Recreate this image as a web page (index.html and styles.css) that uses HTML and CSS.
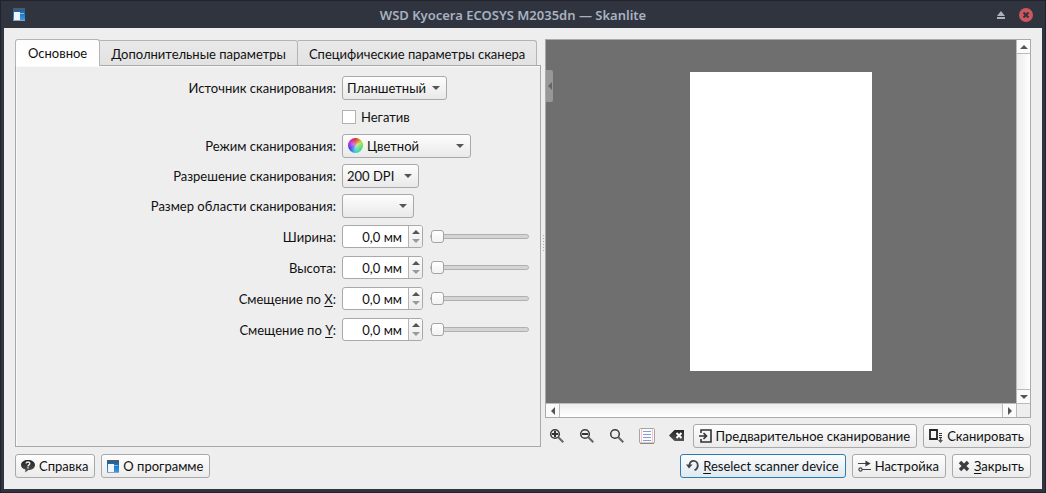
FILE: index.html
```html
<!DOCTYPE html>
<html lang="ru">
<head>
<meta charset="utf-8">
<title>WSD Kyocera ECOSYS M2035dn — Skanlite</title>
<link rel="stylesheet" href="styles.css">
</head>
<body>
<svg class="defs" aria-hidden="true">
  <defs>
    <linearGradient id="blue" x1="0" y1="0" x2="0" y2="1"><stop offset="0" stop-color="#1b5f9f"/><stop offset="1" stop-color="#2f9af0"/></linearGradient>
    <linearGradient id="dark" x1="0" y1="0" x2="0" y2="1"><stop offset="0" stop-color="#222"/><stop offset="1" stop-color="#555"/></linearGradient>
    <symbol id="app" viewBox="0 0 12 13">
      <rect width="12" height="13" fill="#8fb4d6"/><rect width="12" height="2" fill="#4c5a68"/>
      <rect y="2" width="12" height="10" fill="url(#blue)"/><rect x="7" y="5" width="4" height="1" fill="#6fbcff"/>
      <rect x="1" y="4" width="6" height="8" fill="#f2f5f8"/><rect y="12" width="12" height="1" fill="#90a4b5"/>
    </symbol>
    <symbol id="up" viewBox="0 0 8 4"><path d="M0 4 4 0l4 4z"/></symbol>
    <symbol id="down" viewBox="0 0 8 4"><path d="M0 0h8L4 4z"/></symbol>
    <symbol id="left" viewBox="0 0 4 8"><path d="M4 0v8L0 4z"/></symbol>
    <symbol id="right" viewBox="0 0 4 8"><path d="M0 0v8l4-4z"/></symbol>
    <symbol id="lens" viewBox="0 0 16 16"><circle cx="6" cy="6" r="4.3" fill="none" stroke="#3a3a3a" stroke-width="1.5"/><path d="m9.3 9.3 5 5" stroke="#666" stroke-width="2"/></symbol>
  </defs>
</svg>
<div class="window">
  <header class="titlebar">
    <svg class="title-icon"><use href="#app"/></svg>
    <h1>WSD Kyocera ECOSYS M2035dn — Skanlite</h1>
    <div class="window-buttons">
      <button class="win-btn" aria-label="Свернуть"><svg width="8" height="8" viewBox="0 0 8 8" fill="#abb2c0"><path d="M0 5 4 0l4 5zM0 6h8v2H0z"/></svg></button>
      <button class="win-btn close" aria-label="Закрыть окно"><svg width="6" height="6" viewBox="0 0 6 6"><path d="m.5.5 5 5m0-5-5 5" stroke="#2f343f" stroke-width="2"/></svg></button>
    </div>
  </header>
  <main class="content">
    <div class="panes">
      <section class="settings">
        <div class="tabs" role="tablist">
          <button class="tab active" role="tab" aria-selected="true">Основное</button>
          <button class="tab" role="tab">Дополнительные параметры</button>
          <button class="tab" role="tab">Специфические параметры сканера</button>
        </div>
        <form class="panel">
          <label for="source">Источник сканирования:</label>
          <div class="combo w-source"><select id="source"><option>Планшетный</option></select><svg class="arrow"><use href="#down"/></svg></div>
          <div class="check"><input type="checkbox" id="neg"><label for="neg">Негатив</label></div>
          <label for="mode">Режим сканирования:</label>
          <div class="combo w-mode"><span class="wheel"></span><select id="mode"><option>Цветной</option></select><svg class="arrow"><use href="#down"/></svg></div>
          <label for="res">Разрешение сканирования:</label>
          <div class="combo w-res"><select id="res"><option>200 DPI</option></select><svg class="arrow"><use href="#down"/></svg></div>
          <label for="area">Размер области сканирования:</label>
          <div class="combo w-area"><select id="area"><option></option></select><svg class="arrow"><use href="#down"/></svg></div>
          <label for="w">Ширина:</label>
          <div class="measure"><div class="spin"><input id="w" type="text" value="0,0 мм"><div class="steps"><button type="button" aria-label="Больше"><svg><use href="#up"/></svg></button><button type="button" disabled aria-label="Меньше"><svg><use href="#down"/></svg></button></div></div><input type="range" value="0" aria-label="Ширина"></div>
          <label for="h">Высота:</label>
          <div class="measure"><div class="spin"><input id="h" type="text" value="0,0 мм"><div class="steps"><button type="button" aria-label="Больше"><svg><use href="#up"/></svg></button><button type="button" disabled aria-label="Меньше"><svg><use href="#down"/></svg></button></div></div><input type="range" value="0" aria-label="Высота"></div>
          <label for="x">Смещение по <u>X</u>:</label>
          <div class="measure"><div class="spin"><input id="x" type="text" value="0,0 мм"><div class="steps"><button type="button" aria-label="Больше"><svg><use href="#up"/></svg></button><button type="button" disabled aria-label="Меньше"><svg><use href="#down"/></svg></button></div></div><input type="range" value="0" aria-label="Смещение по X"></div>
          <label for="y">Смещение по <u>Y</u>:</label>
          <div class="measure"><div class="spin"><input id="y" type="text" value="0,0 мм"><div class="steps"><button type="button" aria-label="Больше"><svg><use href="#up"/></svg></button><button type="button" disabled aria-label="Меньше"><svg><use href="#down"/></svg></button></div></div><input type="range" value="0" aria-label="Смещение по Y"></div>
        </form>
      </section>
      <div class="splitter"><span class="grip"></span></div>
      <section class="preview">
        <div class="viewer">
          <div class="canvas"><div class="sheet"></div>
            <button class="collapse" aria-label="Скрыть настройки"><svg width="4" height="8"><use href="#left"/></svg></button>
          </div>
          <div class="vbar"><button aria-label="Вверх"><svg width="8" height="4"><use href="#up"/></svg></button><span class="trough"></span><button aria-label="Вниз"><svg width="8" height="4"><use href="#down"/></svg></button></div>
          <div class="hbar"><button aria-label="Влево"><svg width="4" height="8"><use href="#left"/></svg></button><span class="trough"></span><button aria-label="Вправо"><svg width="4" height="8"><use href="#right"/></svg></button></div>
          <div class="corner"></div>
        </div>
        <div class="toolbar">
          <div class="tools">
            <button class="tool" aria-label="Увеличить"><svg width="16" height="16"><use href="#lens"/><path d="M3 6h6M6 3v6" stroke="#333" stroke-width="2"/></svg></button>
            <button class="tool" aria-label="Уменьшить"><svg width="16" height="16"><use href="#lens"/><path d="M3 6h6" stroke="#333" stroke-width="2"/></svg></button>
            <button class="tool" aria-label="Масштаб выделения"><svg width="16" height="16"><use href="#lens"/></svg></button>
            <button class="tool" aria-label="По размеру страницы"><svg width="16" height="16" viewBox="0 0 16 16"><rect x=".5" y=".5" width="15" height="14.500" rx="1" fill="#fcfafa" stroke="#aaa3a3"/><path d="M1 15.500h14" stroke="#8e8787"/><path d="M2.500 1v14M13.500 1v14" stroke="#f6c4c4"/><path d="M4 3.500h8M4 6.500h8M4 9.500h8M4 12.500h8" stroke="#829cd9"/></svg></button>
            <button class="tool" aria-label="Очистить выделение"><svg width="16" height="16" viewBox="0 0 16 16"><path d="M0 7.500 5.500 2H15v11H5.500z" fill="url(#dark)"/><path d="m7.500 5 5 5m0-5-5 5" stroke="#fff" stroke-width="2"/></svg></button>
          </div>
          <button class="btn"><svg width="13" height="14" viewBox="0 0 13 14" fill="none" stroke="#333" stroke-width="1.600"><path d="M2 4V1h10v12H2v-3"/><path d="M0 7h7M4.500 4l3 3-3 3" /></svg>Предварительное сканирование</button>
          <button class="btn"><svg width="14" height="14" viewBox="0 0 14 14"><path d="M1 1h7v9H1z" fill="none" stroke="#222" stroke-width="1.800"/><path d="M10 4.500h3M10 6.500h3M10 8.500h3" stroke="#333"/><path d="M10.800 9h1.500v2H14l-2.500 3L9 11h1.800z" fill="#555"/></svg>Сканировать</button>
        </div>
      </section>
    </div>
    <footer class="actions">
      <button class="btn"><svg width="14" height="14" viewBox="0 0 14 14"><path d="M7 1c4 0 7 2 7 5s-3 5-6.500 5L4 13.500l.5-3C2 10 0 8.500 0 6c0-3 3-5 7-5z" fill="url(#dark)"/><path d="M5 4.500C5.300 2.500 9 2.500 8.800 4.500 8.700 6 7 5.800 7 7.500M7 8.300v1.200" fill="none" stroke="#eee" stroke-width="1.400"/></svg>Справка</button>
      <button class="btn about"><svg width="12" height="13"><use href="#app"/></svg>О программе</button>
      <span class="spacer"></span>
      <button class="btn focused"><svg width="13" height="14" viewBox="0 0 13 14"><path d="M3.500 6.500C3.500 0 11.800.5 11.800 6.500c0 2-1.500 4-3.300 4.800" fill="none" stroke="#444" stroke-width="1.800"/><path d="M0 5.500h6.500L3 9.500z" fill="#444"/></svg><span><u>R</u>eselect scanner device</span></button>
      <button class="btn"><svg width="13" height="14" viewBox="0 0 13 14" fill="none" stroke="#444" stroke-width="1.200"><path d="M0 4.500h12M4 10.500h9"/><circle cx="2.500" cy="10.500" r="1.600"/><path d="m8 2.500 3.500 2-3.500 2z" fill="#222"/></svg>Настройка</button>
      <button class="btn exit"><svg width="12" height="12" viewBox="0 0 12 12"><path d="m2 2 8 8m0-8-8 8" stroke="#3d3d3d" stroke-width="3.400"/></svg><span><u>З</u>акрыть</span></button>
    </footer>
  </main>
</div>
</body>
</html>
```
FILE: styles.css
```css
* { box-sizing: border-box; }
body { margin: 0; font: 13px/18px Lato, "Noto Sans", sans-serif; color: #111; }
button, input, select { font: inherit; color: inherit; margin: 0; padding: 0; }
button { border: 0; background: none; display: flex; align-items: center; justify-content: center; }
svg { display: block; flex: none; }
u { text-underline-offset: 2px; }
.defs { position: absolute; width: 0; height: 0; }

.window {
  min-height: 100vh;
  display: flex;
  flex-direction: column;
  padding: 0 3px 3px;
  background: #2f343f;
  border: 1px solid #20222d;
}
.titlebar {
  height: 27px;
  display: grid;
  grid-template-columns: 60px 1fr 80px;
  align-items: center;
}
.titlebar h1 { margin: 0; font: 600 13px/18px "Noto Sans", sans-serif; text-align: center; color: #a9b1c0; }
.title-icon { width: 12px; height: 13px; margin-left: 9px; }
.window-buttons { display: flex; justify-content: flex-end; gap: 11px; padding-right: 9px; }
.win-btn { width: 14px; height: 14px; }
.close { border-radius: 50%; background: #cc575d; }

.content { flex: 1; display: flex; flex-direction: column; gap: 7px; padding: 11px; background: #eee; }
.panes { flex: 1; display: grid; grid-template-columns: 526fr 4px 486fr; }

.settings { display: flex; flex-direction: column; min-width: 0; }
.tabs { display: flex; align-items: flex-end; }
.tab {
  height: 25px;
  padding: 1px 11px 0;
  border: 1px solid #b4b4b4;
  border-width: 1px 1px 0 0;
  border-radius: 0 3px 0 0;
  background: linear-gradient(#e9e9e9, #e2e2e2);
  white-space: nowrap;
}
.tab.active {
  height: 27px;
  padding: 0 12px;
  margin-bottom: -1px;
  border-width: 1px 1px 0 1px;
  border-radius: 3px 3px 0 0;
  background: linear-gradient(#fdfdfd, #fff);
  z-index: 1;
}
.panel {
  flex: 1;
  display: grid;
  grid-template-columns: 1fr 187px;
  grid-auto-rows: min-content;
  gap: 6px;
  align-items: center;
  padding: 10px 11px;
  border: 1px solid #a8a8a8;
  box-shadow: inset 1px 1px #fafafa;
}
.panel > label { text-align: right; }
.combo { position: relative; height: 24px; }
.combo select {
  appearance: none;
  width: 100%;
  height: 100%;
  padding: 0 0 0 4px;
  border: 1px solid #a9a9a9;
  border-radius: 3px;
  background: linear-gradient(#fdfdfd, #e9e9e9);
}
.w-source { width: 105px; }
.w-mode { width: 129px; }
.w-res { width: 77px; }
.w-area { width: 72px; }
.combo.w-mode select { padding-left: 24px; }
.arrow { position: absolute; right: 7px; top: 10px; width: 8px; height: 4px; fill: #555; pointer-events: none; }
.wheel {
  position: absolute;
  left: 6px;
  top: 4px;
  width: 15px;
  height: 15px;
  border-radius: 50%;
  background: radial-gradient(#fff8, #fff0 70%), conic-gradient(#d22, #bd3 60deg, #4d6 110deg, #3cc 180deg, #33e 240deg, #b2d 300deg, #d22);
}
.check { grid-column: 2; display: flex; align-items: center; gap: 5px; height: 22px; }
.check input { appearance: none; width: 14px; height: 14px; border: 1px solid #b2b2b2; background: #fff; }
.measure { display: flex; align-items: center; gap: 7px; height: 25px; }
.spin { display: flex; width: 81px; height: 23px; border: 1px solid #a9a9a9; border-radius: 3px; background: #fff; overflow: hidden; }
.spin input { flex: 1; min-width: 0; border: 0; padding: 0 6px 0 0; text-align: right; background: none; }
.steps { display: flex; flex-direction: column; justify-content: center; gap: 5px; width: 14px; border-left: 1px solid #b4b4b4; background: linear-gradient(#fafafa, #ececec); }
.steps svg { width: 8px; height: 4px; fill: #555; }
.steps button:disabled svg { fill: #999; }
input[type="range"] { appearance: none; flex: 1; min-width: 0; height: 14px; background: none; }
input[type="range"]::-webkit-slider-runnable-track { height: 5px; border: 1px solid #b0b0b0; border-radius: 3px; background: #d4d4d4; }
input[type="range"]::-webkit-slider-thumb { appearance: none; width: 13px; height: 13px; margin-top: -5px; border: 1px solid #a4a4a4; border-radius: 3px; background: linear-gradient(#fff, #f2f2f2); }

.splitter { display: flex; align-items: center; justify-content: center; }
.grip { width: 1px; height: 17px; background: repeating-linear-gradient(#aaa 0 1px, #eee 1px 3px); }

.preview { display: flex; flex-direction: column; gap: 6px; min-width: 0; }
.viewer { flex: 1; display: grid; grid-template: 1fr 14px / 1fr 14px; border: 1px solid #aaa; }
.canvas { position: relative; display: flex; justify-content: center; padding: 32px; background: #6f6f6f; }
.sheet { aspect-ratio: 181 / 298; background: #fff; }
.collapse { position: absolute; left: 0; top: 30px; width: 7px; height: 32px; border-radius: 0 2px 2px 0; background: #989898; }
.collapse svg { fill: #666; }
.vbar, .hbar { display: flex; background: #fbfbfb; }
.vbar { flex-direction: column; border-left: 1px solid #bbb; }
.hbar { border-top: 1px solid #bbb; }
.vbar svg, .hbar svg { fill: #555; }
.trough { flex: 1; }
.vbar .trough { border: 1px solid #bbb; border-width: 1px 0; background: linear-gradient(90deg, #ececec, #fff); }
.hbar .trough { border: 1px solid #bbb; border-width: 0 1px; background: linear-gradient(#ececec, #fff); }
.vbar button { height: 13px; }
.hbar button { width: 13px; }
.corner { border: 1px solid #bbb; border-width: 1px 0 0 1px; }

.toolbar { display: flex; align-items: center; gap: 6px; margin-bottom: -1px; }
.tools { flex: 1; display: flex; gap: 14px; padding-left: 4px; }
.tool { width: 16px; height: 16px; }
.btn {
  height: 24px;
  padding: 0 6px 0 5px;
  gap: 4px;
  border: 1px solid #a9a9a9;
  border-radius: 3px;
  background: linear-gradient(#fefefe, #ebebeb);
  white-space: nowrap;
}
.btn.focused { border-color: #2c7cb0; background: linear-gradient(#fbfdfe, #dfe9f0); }
.actions { display: flex; gap: 6px; }
.spacer { flex: 1; }
```
